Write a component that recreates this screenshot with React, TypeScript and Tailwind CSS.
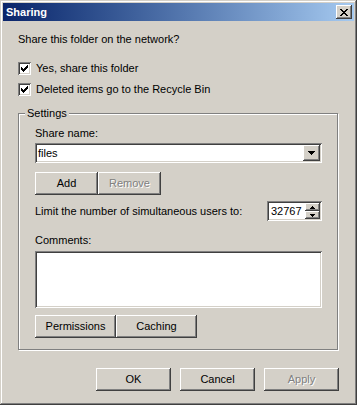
import React from "react";

const raised =
  "shadow-[inset_-1px_-1px_#404040,inset_1px_1px_#ffffff,inset_-2px_-2px_#808080,inset_2px_2px_#d4d0c8]";
const sunken =
  "shadow-[inset_1px_1px_#808080,inset_-1px_-1px_#ffffff,inset_2px_2px_#404040,inset_-2px_-2px_#d4d0c8]";

function Button({
  label,
  width,
  disabled,
}: {
  label: string;
  width: string;
  disabled?: boolean;
}) {
  return (
    <div
      className={`${width} h-[23px] flex items-center justify-center bg-[#d4d0c8] ${raised} ${
        disabled ? "text-[#808080] [text-shadow:1px_1px_0_#ffffff]" : "text-black"
      }`}
    >
      {label}
    </div>
  );
}

function Check() {
  const starts = [2, 3, 4, 3, 2, 1, 0];
  const d = starts.map((y, i) => `M${3 + i} ${3 + y}h1v3h-1z`).join("");
  return (
    <div className={`w-[13px] h-[13px] bg-white ${sunken} shrink-0`}>
      <svg width="13" height="13" viewBox="0 0 13 13">
        <path d={d} fill="#000" />
      </svg>
    </div>
  );
}

function CheckRow({ label }: { label: string }) {
  return (
    <div className="flex items-center h-[13px]">
      <Check />
      <span className="ml-[5px]">{label}</span>
    </div>
  );
}

function CloseGlyph() {
  const rows = [
    [0, 1, 6, 7],
    [1, 2, 5, 6],
    [2, 3, 4, 5],
    [3, 4],
    [2, 3, 4, 5],
    [1, 2, 5, 6],
    [0, 1, 6, 7],
  ];
  const d = rows
    .map((cols, y) => cols.map((x) => `M${x} ${y}h1v1h-1z`).join(""))
    .join("");
  return (
    <svg width="8" height="7" viewBox="0 0 8 7">
      <path d={d} fill="#000" />
    </svg>
  );
}

export default function App() {
  return (
    <div
      className="w-[357px] h-[405px] bg-[#d4d0c8] p-[3px] text-[11px] leading-[13px] text-black shadow-[inset_-1px_-1px_#404040,inset_1px_1px_#d4d0c8,inset_-2px_-2px_#808080,inset_2px_2px_#ffffff]"
      style={{ fontFamily: '"Liberation Sans", Arial, sans-serif' }}
    >
      <div className="h-[18px] flex items-center justify-between pl-[3px] pr-[2px] bg-gradient-to-r from-[#0a246a] to-[#a6caf0]">
        <span className="text-white font-bold">Sharing</span>
        <div className={`w-[16px] h-[14px] bg-[#d4d0c8] flex items-center justify-center ${raised}`}>
          <CloseGlyph />
        </div>
      </div>

      <div className="px-[15px]">
        <div className="mt-[12px]">Share this folder on the network?</div>
        <div className="mt-[16px]">
          <CheckRow label="Yes, share this folder" />
        </div>
        <div className="mt-[8px]">
          <CheckRow label="Deleted items go to the Recycle Bin" />
        </div>

        <div className="relative mt-[17px] w-[320px] border border-[#808080] shadow-[1px_1px_0_#ffffff,inset_1px_1px_0_#ffffff] pl-[16px] pr-[15px] pt-[13px] pb-[11px]">
          <span className="absolute left-[6px] top-[-7px] bg-[#d4d0c8] px-[2px]">Settings</span>

          <div>Share name:</div>
          <div className={`mt-[3px] h-[20px] bg-white ${sunken} flex items-center justify-between pl-[3px] pr-[2px]`}>
            <span>files</span>
            <div className={`w-[17px] h-[16px] bg-[#d4d0c8] flex items-center justify-center ${raised}`}>
              <svg width="7" height="4" viewBox="0 0 7 4">
                <path d="M0 0h7v1h-1v1h-1v1h-1v1h-1v-1h-1v-1h-1v-1h-1z" fill="#000" />
              </svg>
            </div>
          </div>

          <div className="mt-[9px] flex">
            <Button label="Add" width="w-[63px]" />
            <Button label="Remove" width="w-[63px]" disabled />
          </div>

          <div className="mt-[6px] h-[20px] flex items-center justify-between">
            <span>Limit the number of simultaneous users to:</span>
            <div className={`w-[55px] h-[20px] bg-white ${sunken} flex items-center justify-between pl-[4px] pr-[2px]`}>
              <span>32767</span>
              <div className="flex flex-col">
                <div className={`w-[15px] h-[8px] bg-[#d4d0c8] flex items-center justify-center ${raised}`}>
                  <svg width="5" height="3" viewBox="0 0 5 3">
                    <path d="M2 0h1v1h1v1h1v1h-5v-1h1v-1h1z" fill="#000" />
                  </svg>
                </div>
                <div className={`w-[15px] h-[8px] bg-[#d4d0c8] flex items-center justify-center ${raised}`}>
                  <svg width="5" height="3" viewBox="0 0 5 3">
                    <path d="M0 0h5v1h-1v1h-1v1h-1v-1h-1v-1h-1z" fill="#000" />
                  </svg>
                </div>
              </div>
            </div>
          </div>

          <div className="mt-[13px]">Comments:</div>
          <div className={`mt-[4px] h-[57px] bg-white ${sunken}`} />

          <div className="mt-[7px] flex">
            <Button label="Permissions" width="w-[81px]" />
            <Button label="Caching" width="w-[81px]" />
          </div>
        </div>

        <div className="mt-[18px] flex justify-end gap-[9px]">
          <Button label="OK" width="w-[75px]" />
          <Button label="Cancel" width="w-[75px]" />
          <Button label="Apply" width="w-[75px]" disabled />
        </div>
      </div>
    </div>
  );
}
